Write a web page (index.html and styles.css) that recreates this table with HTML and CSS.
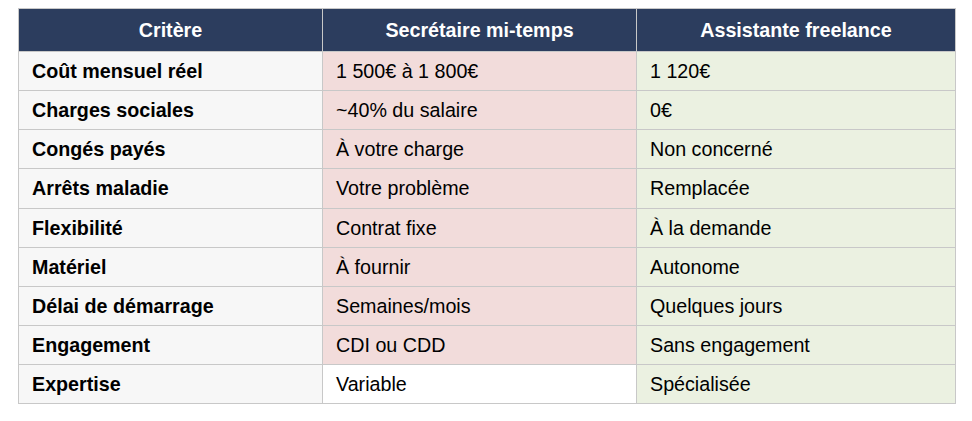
FILE: index.html
```html
<!DOCTYPE html>
<html lang="fr">
<head>
<meta charset="utf-8">
<title>Comparatif</title>
<link rel="stylesheet" href="styles.css">
</head>
<body>
<table class="cmp">
  <colgroup>
    <col class="c1"><col class="c2"><col class="c3">
  </colgroup>
  <thead>
    <tr><th>Critère</th><th>Secrétaire mi-temps</th><th>Assistante freelance</th></tr>
  </thead>
  <tbody>
    <tr><td class="crit">Coût mensuel réel</td><td class="sec">1 500€ à 1 800€</td><td class="free">1 120€</td></tr>
    <tr><td class="crit">Charges sociales</td><td class="sec">~40% du salaire</td><td class="free">0€</td></tr>
    <tr><td class="crit">Congés payés</td><td class="sec">À votre charge</td><td class="free">Non concerné</td></tr>
    <tr><td class="crit">Arrêts maladie</td><td class="sec">Votre problème</td><td class="free">Remplacée</td></tr>
    <tr><td class="crit">Flexibilité</td><td class="sec">Contrat fixe</td><td class="free">À la demande</td></tr>
    <tr><td class="crit">Matériel</td><td class="sec">À fournir</td><td class="free">Autonome</td></tr>
    <tr><td class="crit">Délai de démarrage</td><td class="sec">Semaines/mois</td><td class="free">Quelques jours</td></tr>
    <tr><td class="crit">Engagement</td><td class="sec">CDI ou CDD</td><td class="free">Sans engagement</td></tr>
    <tr><td class="crit">Expertise</td><td class="plain">Variable</td><td class="free">Spécialisée</td></tr>
  </tbody>
</table>
</body>
</html>
```

FILE: styles.css
```css
html, body {
  margin: 0;
  padding: 0;
  background: #ffffff;
}
body {
  padding: 8px 18px;
  font-family: "Liberation Sans", Arial, sans-serif;
  font-size: 19.7px;
  color: #000000;
}
.cmp {
  border-collapse: collapse;
  table-layout: fixed;
  width: 937px;
}
.c1 { width: 304px; }
.c2 { width: 314px; }
.c3 { width: 319px; }
.cmp th,
.cmp td {
  border: 1px solid #c8c8c8;
  padding: 0 13px;
  text-align: left;
  line-height: 22px;
}
.cmp th {
  background: #2c3d5e;
  color: #ffffff;
  font-weight: bold;
  text-align: center;
  height: 42px;
}
.cmp td {
  height: 38.15px;
}
.crit {
  background: #f7f7f7;
  font-weight: bold;
}
.sec {
  background: #f2dcdb;
}
.free {
  background: #ebf1e1;
}
.plain {
  background: #ffffff;
}
```
